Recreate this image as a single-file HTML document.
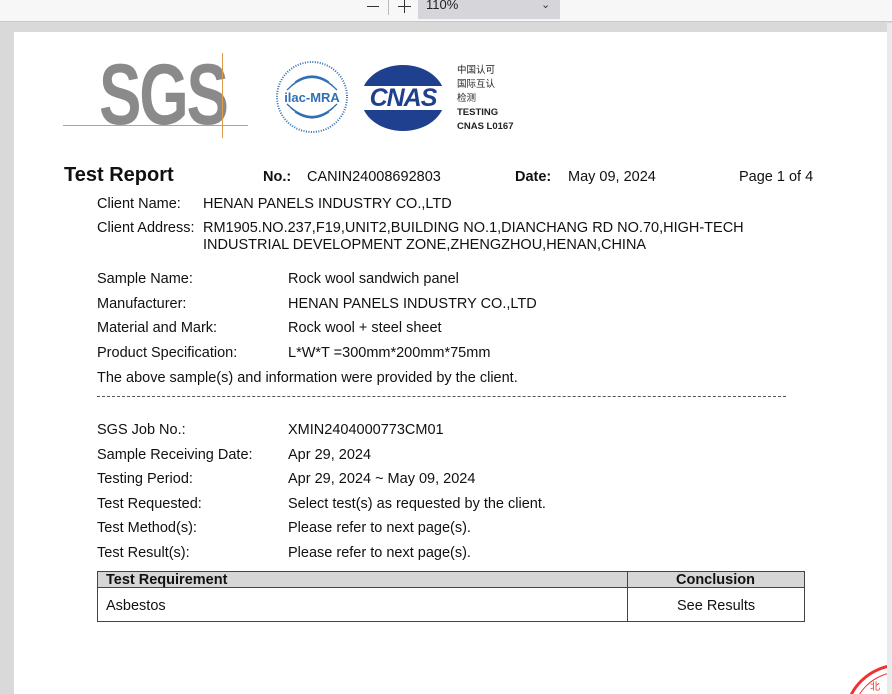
<!DOCTYPE html>
<html><head><meta charset="utf-8"><style>
*{margin:0;padding:0;box-sizing:border-box}
html,body{width:892px;height:694px;overflow:hidden}
body{background:#d9d9d9;position:relative;font-family:"Liberation Sans","Noto Sans CJK SC",sans-serif;color:#111}
.tb{position:absolute;left:0;top:0;width:892px;height:22px;background:#f7f7f7;border-bottom:1px solid #c8c8c8}
.page{position:absolute;left:14px;top:32px;width:873px;height:662px;background:#fff}
.sb{position:absolute;left:887px;top:23px;width:5px;height:671px;background:#eaeaea}
.t{position:absolute;font-size:14.5px;white-space:nowrap;line-height:16px}
.b{font-weight:bold}
</style></head><body>
<div class="tb">
 <div style="position:absolute;left:367px;top:6px;width:12px;height:1px;background:#333"></div>
 <div style="position:absolute;left:388px;top:0px;width:1px;height:15px;background:#bbb"></div>
 <div style="position:absolute;left:398px;top:6px;width:13px;height:1px;background:#333"></div>
 <div style="position:absolute;left:404px;top:0px;width:1px;height:13px;background:#333"></div>
 <div style="position:absolute;left:418px;top:0;width:142px;height:19px;background:#d6d6da"></div>
 <div class="t" style="left:426px;top:-3px;font-size:13px;color:#222">110%</div>
 <div class="t" style="left:541px;top:-3px;font-size:11px;color:#333">⌄</div>
</div>
<div class="sb"></div>
<div class="page"></div>
<!-- SGS logo -->
<div style="position:absolute;left:99px;top:52px;font:bold 86px/86px 'Liberation Sans',sans-serif;color:#8a8a8a;letter-spacing:-3px;transform:scaleX(0.74);transform-origin:left top">SGS</div>
<div style="position:absolute;left:63px;top:125px;width:185px;height:1px;background:#e09a4c"></div>
<div style="position:absolute;left:222px;top:53px;width:1px;height:85px;background:#e09a4c"></div>
<!-- ilac -->
<svg style="position:absolute;left:275px;top:60px" width="74" height="74" viewBox="0 0 74 74">
<circle cx="37" cy="37" r="35" fill="none" stroke="#2f6fb3" stroke-width="2" stroke-dasharray="1 1.5"/>
<path d="M12 30 Q37 5 62 30 M16 26 Q37 8 58 26 M20 22 Q37 10 54 22 M12 44 Q37 69 62 44 M16 48 Q37 66 58 48 M20 52 Q37 64 54 52" fill="none" stroke="#2f6fb3" stroke-width="1.3"/>
<text x="37" y="42" text-anchor="middle" font-family="Liberation Sans" font-weight="bold" font-size="13" fill="#2f6fb3">ilac-MRA</text>
</svg>
<!-- CNAS -->
<svg style="position:absolute;left:360px;top:64px" width="86" height="68" viewBox="0 0 86 68">
<ellipse cx="43" cy="34" rx="42" ry="33" fill="#1f3f8f"/>
<rect x="0" y="22" width="86" height="24" fill="#fff"/>
<text x="43" y="42" text-anchor="middle" font-family="Liberation Sans" font-weight="bold" font-style="italic" font-size="25" fill="#1f3f8f" letter-spacing="-1">CNAS</text>
</svg>
<div style="position:absolute;left:457px;top:64px;font-size:9.5px;line-height:14px;color:#222">中国认可<br>国际互认<br>检测<br><b>TESTING<br>CNAS L0167</b></div>

<div class="t b" style="left:64px;top:164px;font-size:20px;line-height:22px">Test Report</div>
<div class="t b" style="left:263px;top:169px">No.:</div>
<div class="t" style="left:307px;top:169px">CANIN24008692803</div>
<div class="t b" style="left:515px;top:169px">Date:</div>
<div class="t" style="left:568px;top:169px">May 09, 2024</div>
<div class="t" style="left:739px;top:169px">Page 1 of 4</div>

<div class="t" style="left:97px;top:196px">Client Name:</div>
<div class="t" style="left:203px;top:196px">HENAN PANELS INDUSTRY CO.,LTD</div>
<div class="t" style="left:97px;top:220px">Client Address:</div>
<div class="t" style="left:203px;top:220px">RM1905.NO.237,F19,UNIT2,BUILDING NO.1,DIANCHANG RD NO.70,HIGH-TECH</div>
<div class="t" style="left:203px;top:237px">INDUSTRIAL DEVELOPMENT ZONE,ZHENGZHOU,HENAN,CHINA</div>

<div class="t" style="left:97px;top:271px">Sample Name:</div><div class="t" style="left:288px;top:271px">Rock wool sandwich panel</div>
<div class="t" style="left:97px;top:296px">Manufacturer:</div><div class="t" style="left:288px;top:296px">HENAN PANELS INDUSTRY CO.,LTD</div>
<div class="t" style="left:97px;top:320px">Material and Mark:</div><div class="t" style="left:288px;top:320px">Rock wool + steel sheet</div>
<div class="t" style="left:97px;top:345px">Product Specification:</div><div class="t" style="left:288px;top:345px">L*W*T =300mm*200mm*75mm</div>
<div class="t" style="left:97px;top:370px">The above sample(s) and information were provided by the client.</div>
<div style="position:absolute;left:97px;top:396px;width:689px;height:0;border-top:1px dashed #555"></div>

<div class="t" style="left:97px;top:422px">SGS Job No.:</div><div class="t" style="left:288px;top:422px">XMIN2404000773CM01</div>
<div class="t" style="left:97px;top:447px">Sample Receiving Date:</div><div class="t" style="left:288px;top:447px">Apr 29, 2024</div>
<div class="t" style="left:97px;top:471px">Testing Period:</div><div class="t" style="left:288px;top:471px">Apr 29, 2024 ~ May 09, 2024</div>
<div class="t" style="left:97px;top:496px">Test Requested:</div><div class="t" style="left:288px;top:496px">Select test(s) as requested by the client.</div>
<div class="t" style="left:97px;top:520px">Test Method(s):</div><div class="t" style="left:288px;top:520px">Please refer to next page(s).</div>
<div class="t" style="left:97px;top:545px">Test Result(s):</div><div class="t" style="left:288px;top:545px">Please refer to next page(s).</div>

<div style="position:absolute;left:97px;top:571px;width:708px;height:51px;border:1px solid #444"></div>
<div style="position:absolute;left:98px;top:572px;width:706px;height:16px;background:#d6d6d6;border-bottom:1px solid #444"></div>
<div style="position:absolute;left:627px;top:572px;width:1px;height:50px;background:#444"></div>
<div class="t b" style="left:106px;top:572px">Test Requirement</div>
<div class="t b" style="left:676px;top:572px">Conclusion</div>
<div class="t" style="left:106px;top:598px">Asbestos</div>
<div class="t" style="left:677px;top:598px">See Results</div>

<svg style="position:absolute;left:840px;top:660px" width="47" height="34" viewBox="0 0 47 34">
<circle cx="60" cy="60" r="55" fill="none" stroke="#e33" stroke-width="3"/>
<circle cx="60" cy="60" r="48" fill="none" stroke="#e33" stroke-width="1"/>
<text x="30" y="30" font-size="10" fill="#e33">北</text>
</svg>
</body></html>
